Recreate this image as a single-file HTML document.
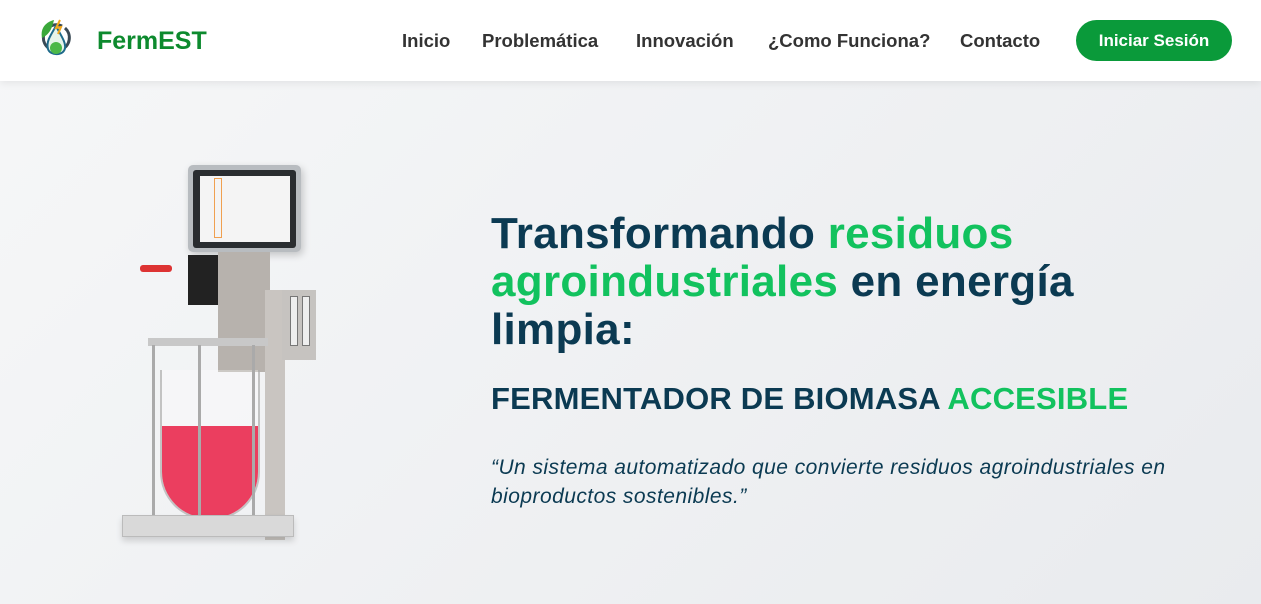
<!DOCTYPE html>
<html><head><meta charset="utf-8"><style>
*{margin:0;padding:0;box-sizing:border-box}
body{width:1261px;height:604px;overflow:hidden;font-family:"Liberation Sans",sans-serif;background:linear-gradient(135deg,#f6f7f8,#e9ebee)}
.nav{position:absolute;top:0;left:0;width:1261px;height:81px;background:#fff;box-shadow:0 2px 8px rgba(0,0,0,.08)}
.brand{position:absolute;left:97px;top:27px;font-size:25px;font-weight:bold;color:#0d8a2e}
.links{position:absolute;top:30px;font-size:18.5px;font-weight:bold;color:#333}
.links span{position:absolute;white-space:nowrap}
.btn{position:absolute;left:1076px;top:20px;width:156px;height:41px;border-radius:21px;background:#0a9a3a;color:#fff;font-weight:bold;font-size:17px;text-align:center;line-height:41px}
h1{position:absolute;left:491px;top:210px;font-size:44px;line-height:48px;font-weight:900;color:#0b3a52;letter-spacing:.3px;width:720px}
.g{color:#12c25e}
h2{position:absolute;left:491px;top:381px;font-size:31px;font-weight:900;color:#0b3a52;letter-spacing:.2px}
p{position:absolute;left:491px;top:453px;font-size:21px;line-height:29px;font-style:italic;color:#0b3a52;width:700px;letter-spacing:.45px}
.a{position:absolute}
</style></head><body>
<div class="nav">
<svg class="a" style="left:38px;top:18px" width="38" height="42" viewBox="0 0 38 42">
<path d="M27 10 a13 13 0 1 1 -3 -2" fill="none" stroke="#3a4a55" stroke-width="3"/>
<path d="M4 20 C2 10 8 4 16 2 C14 10 12 16 4 20Z" fill="#3aa83a"/>
<path d="M18 8 C12 18 8 24 10 31 C12 38 26 38 27 30 C28 24 22 16 18 8Z" fill="#e6f4ea" stroke="#1e6a8a" stroke-width="2"/>
<circle cx="18" cy="30" r="6" fill="#4cb848"/>
<path d="M22 2 L18 10 L23 9 L20 16" fill="none" stroke="#f2a81b" stroke-width="2"/>
</svg>
<div class="brand">FermEST</div>
<div class="links"><span style="left:402px">Inicio</span><span style="left:482px">Problemática</span><span style="left:636px">Innovación</span><span style="left:768px">¿Como Funciona?</span><span style="left:960px">Contacto</span></div>
<div class="btn">Iniciar Sesión</div>
</div>

<div class="a" style="left:188px;top:165px;width:113px;height:87px;background:#b8bcc0;border-radius:5px;box-shadow:2px 3px 8px rgba(0,0,0,.2)"></div>
<div class="a" style="left:193px;top:170px;width:103px;height:78px;background:#2a2d30;border-radius:3px"></div>
<div class="a" style="left:200px;top:176px;width:90px;height:66px;background:#f4f4f4"></div>
<div class="a" style="left:214px;top:178px;width:8px;height:60px;border:1px solid #f0a050"></div>
<div class="a" style="left:218px;top:252px;width:52px;height:120px;background:#b7b2ad"></div>
<div class="a" style="left:265px;top:290px;width:20px;height:250px;background:#c9c5c1"></div>
<div class="a" style="left:282px;top:290px;width:34px;height:70px;background:#c6c3c0"></div>
<div class="a" style="left:290px;top:296px;width:8px;height:50px;background:#eee;border:1px solid #777"></div>
<div class="a" style="left:302px;top:296px;width:8px;height:50px;background:#eee;border:1px solid #777"></div>
<div class="a" style="left:188px;top:255px;width:30px;height:50px;background:#222"></div>
<div class="a" style="left:140px;top:265px;width:32px;height:7px;background:#d33;border-radius:3px"></div>
<div class="a" style="left:148px;top:338px;width:120px;height:8px;background:#c8c8c8"></div>
<div class="a" style="left:160px;top:370px;width:100px;height:150px;border:2px solid rgba(160,160,160,.6);border-top:none;border-radius:0 0 48px 48px;background:rgba(255,255,255,.3)"></div>
<div class="a" style="left:162px;top:426px;width:96px;height:92px;background:#ea2a4e;border-radius:0 0 46px 46px;opacity:.9"></div>
<div class="a" style="left:152px;top:345px;width:3px;height:180px;background:#aaa"></div>
<div class="a" style="left:198px;top:345px;width:3px;height:180px;background:#aaa"></div>
<div class="a" style="left:252px;top:345px;width:3px;height:180px;background:#aaa"></div>
<div class="a" style="left:122px;top:515px;width:172px;height:22px;background:#d9d9d9;border:1px solid #bbb;box-shadow:0 4px 6px rgba(0,0,0,.15)"></div>

<h1>Transformando <span class="g">residuos agroindustriales</span> en energía limpia:</h1>
<h2>FERMENTADOR DE BIOMASA <span class="g">ACCESIBLE</span></h2>
<p>“Un sistema automatizado que convierte residuos agroindustriales en bioproductos sostenibles.”</p>
</body></html>
